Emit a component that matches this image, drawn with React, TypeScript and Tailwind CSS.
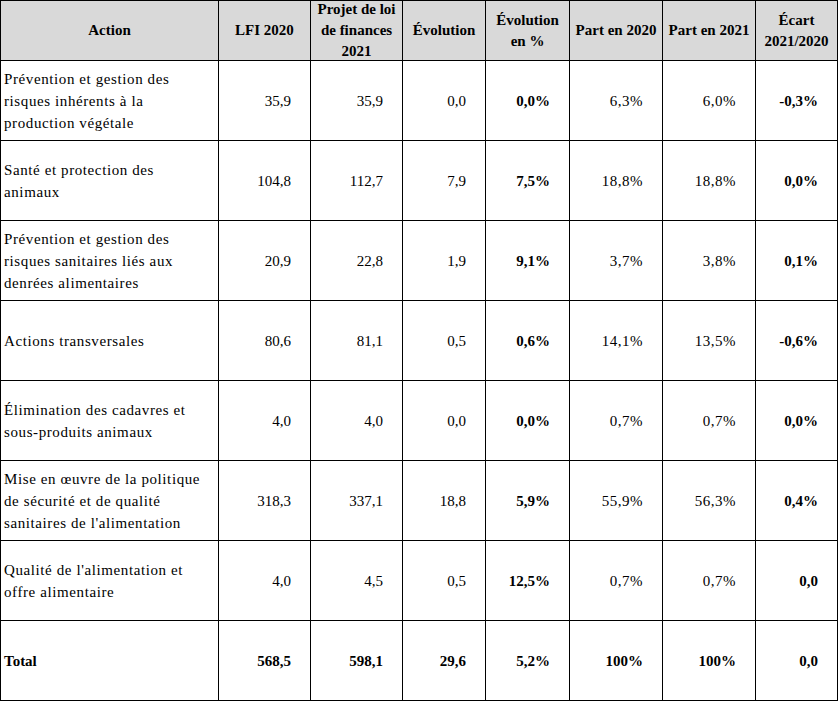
import React from 'react';

type Row = {
  action: string[];
  lfi: string;
  plf: string;
  evo: string;
  evoPct: string;
  part2020: string;
  part2021: string;
  ecart: string;
};

const rows: Row[] = [
  {
    action: ['Prévention et gestion des', 'risques inhérents à la', 'production végétale'],
    lfi: '35,9', plf: '35,9', evo: '0,0', evoPct: '0,0%', part2020: '6,3%', part2021: '6,0%', ecart: '-0,3%',
  },
  {
    action: ['Santé et protection des', 'animaux'],
    lfi: '104,8', plf: '112,7', evo: '7,9', evoPct: '7,5%', part2020: '18,8%', part2021: '18,8%', ecart: '0,0%',
  },
  {
    action: ['Prévention et gestion des', 'risques sanitaires liés aux', 'denrées alimentaires'],
    lfi: '20,9', plf: '22,8', evo: '1,9', evoPct: '9,1%', part2020: '3,7%', part2021: '3,8%', ecart: '0,1%',
  },
  {
    action: ['Actions transversales'],
    lfi: '80,6', plf: '81,1', evo: '0,5', evoPct: '0,6%', part2020: '14,1%', part2021: '13,5%', ecart: '-0,6%',
  },
  {
    action: ['Élimination des cadavres et', 'sous-produits animaux'],
    lfi: '4,0', plf: '4,0', evo: '0,0', evoPct: '0,0%', part2020: '0,7%', part2021: '0,7%', ecart: '0,0%',
  },
  {
    action: ['Mise en œuvre de la politique', 'de sécurité et de qualité', "sanitaires de l'alimentation"],
    lfi: '318,3', plf: '337,1', evo: '18,8', evoPct: '5,9%', part2020: '55,9%', part2021: '56,3%', ecart: '0,4%',
  },
  {
    action: ["Qualité de l'alimentation et", 'offre alimentaire'],
    lfi: '4,0', plf: '4,5', evo: '0,5', evoPct: '12,5%', part2020: '0,7%', part2021: '0,7%', ecart: '0,0',
  },
];

const th = 'border border-black bg-[#d9d9d9] font-bold align-middle p-0';
const num = 'border border-black text-right align-middle pr-[19px]';

// cellule d'en-tête : hauteur fixe, le texte peut déborder un peu comme dans Word
function Head({ children, nowrap }: { children: React.ReactNode; nowrap?: boolean }) {
  return (
    <th className={th}>
      <div
        className={`h-[59px] flex flex-col items-center justify-center text-center leading-[21px] ${
          nowrap ? 'whitespace-nowrap' : ''
        }`}
      >
        {children}
      </div>
    </th>
  );
}

export default function App() {
  return (
    <div className="bg-white w-[838px] h-[701px] text-black font-['Liberation_Serif',serif] text-[15px] leading-[22px]">
      <table className="table-fixed border-collapse w-[837px]">
        <colgroup>
          <col className="w-[218px]" />
          <col className="w-[92px]" />
          <col className="w-[92px]" />
          <col className="w-[83px]" />
          <col className="w-[84px]" />
          <col className="w-[93px]" />
          <col className="w-[93px]" />
          <col className="w-[82px]" />
        </colgroup>
        <thead>
          <tr className="h-[60px]">
            <Head>Action</Head>
            <Head>LFI 2020</Head>
            <Head>
              <span>Projet de loi</span>
              <span>de finances</span>
              <span>2021</span>
            </Head>
            <Head>Évolution</Head>
            <Head>
              <span>Évolution</span>
              <span>en %</span>
            </Head>
            <Head nowrap>Part en 2020</Head>
            <Head nowrap>Part en 2021</Head>
            <Head>
              <span>Écart</span>
              <span>2021/2020</span>
            </Head>
          </tr>
        </thead>
        <tbody>
          {rows.map((r, i) => (
            <tr key={i} className="h-[80px]">
              <td className="border border-black align-middle pl-[3px] whitespace-nowrap tracking-[0.6px]">
                {r.action.map((l, j) => (
                  <div key={j}>{l}</div>
                ))}
              </td>
              <td className={num}>{r.lfi}</td>
              <td className={num}>{r.plf}</td>
              <td className={num}>{r.evo}</td>
              <td className={`${num} font-bold`}>{r.evoPct}</td>
              <td className={`${num} tracking-[0.5px]`}>{r.part2020}</td>
              <td className={`${num} tracking-[0.5px]`}>{r.part2021}</td>
              <td className={`${num} font-bold`}>{r.ecart}</td>
            </tr>
          ))}
          <tr className="h-[80px] font-bold">
            <td className="border border-black align-middle pl-[3px]">Total</td>
            <td className={num}>568,5</td>
            <td className={num}>598,1</td>
            <td className={num}>29,6</td>
            <td className={num}>5,2%</td>
            <td className={num}>100%</td>
            <td className={num}>100%</td>
            <td className={num}>0,0</td>
          </tr>
        </tbody>
      </table>
    </div>
  );
}
